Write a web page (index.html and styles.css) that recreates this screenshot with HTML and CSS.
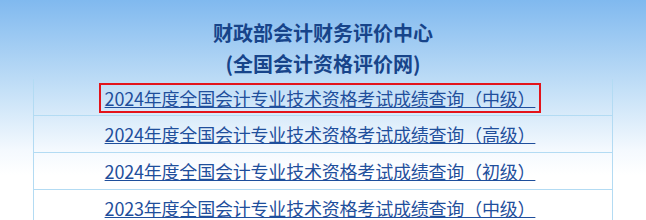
FILE: index.html
```html
<!DOCTYPE html>
<html lang="zh-CN">
<head>
  <meta charset="UTF-8" />
  <meta name="viewport" content="width=device-width, initial-scale=1.0"/>
  <title>成绩查询</title>
  <link rel="stylesheet" href="styles.css">
</head>
<body>
  <div class="header">
    <div class="title">财政部会计财务评价中心</div>
    <div class="title">(全国会计资格评价网)</div>
  </div>

  <div class="list">
    <div class="row first">
      <a class="link current" href="#">2024年度全国会计专业技术资格考试成绩查询（中级）</a>
    </div>
    <div class="row">
      <a class="link" href="#">2024年度全国会计专业技术资格考试成绩查询（高级）</a>
    </div>
    <div class="row">
      <a class="link" href="#">2024年度全国会计专业技术资格考试成绩查询（初级）</a>
    </div>
    <div class="row">
      <a class="link" href="#">2023年度全国会计专业技术资格考试成绩查询（中级）</a>
    </div>
  </div>
</body>
</html>
```

FILE: styles.css
```css
body {
  margin: 0;
  height: 220px;
  overflow: hidden;
  font-family: "Noto Sans CJK SC", "Noto Sans", sans-serif;
  background: linear-gradient(to bottom, #80b9ef 0px, #c4e0f7 90px, #f4f9fe 150px, #ffffff 175px);
}

.header {
  padding-top: 17px;
  text-align: center;
}

.title {
  font-size: 20px;
  font-weight: bold;
  line-height: 31px;
  color: #17448a;
}

.list {
  margin: 0 33px;
  border-left: 1px solid #b3dbf3;
  border-right: 1px solid #b3dbf3;
}

.row {
  height: 36px;
  padding-right: 6px;
  border-bottom: 1px solid #b3dbf3;
  display: flex;
  align-items: center;
  justify-content: center;
}

.row.first {
  align-items: flex-start;
}

.link {
  font-size: 18px;
  line-height: 26px;
  letter-spacing: -0.2px;
  color: #1f4f9c;
  text-decoration: underline;
  white-space: nowrap;
  padding: 0 4px;
  border: 2px solid transparent;
}

.row.first .link {
  margin-top: 4px;
}

.link.current {
  border-color: #e3141b;
}
```
